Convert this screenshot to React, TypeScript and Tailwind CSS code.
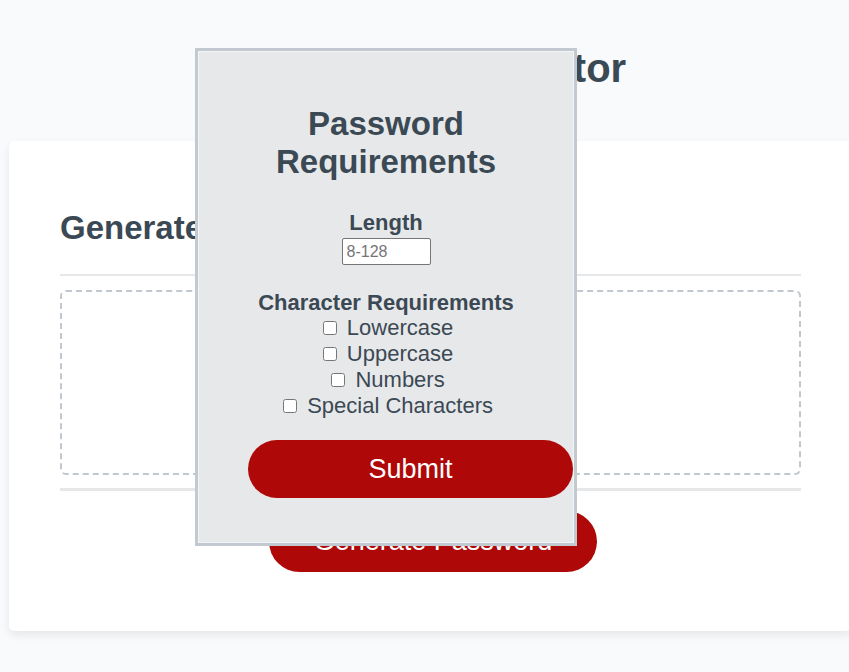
import React from "react";

// Character options shown in the requirements modal
const charOptions = ["Lowercase", "Uppercase", "Numbers", "Special Characters"];

export default function App() {
  return (
    <div className="relative min-h-screen w-full overflow-hidden bg-[#f9fafb] font-['Liberation_Sans',Arial,sans-serif] text-[#3b4954]">
      <div className="ml-[9px] w-[843px]">
        <h1 className="pt-[45px] text-center text-[40px] font-bold leading-[46px]">
          Password Generator
        </h1>

        {/* Card */}
        <div className="mt-[50px] h-[490px] rounded-[5px] bg-white px-[51px] shadow-[0_4px_10px_rgba(0,0,0,0.08)]">
          <div className="border-b-2 border-[#e6e7e9] pt-[68px] pb-[27px]">
            <h2 className="text-[33px] font-bold leading-[38px]">Generate a Password</h2>
          </div>
          <div className="mt-[14px] flex h-[185px] items-center justify-center rounded-[6px] border-2 border-dashed border-[#c0c7ce] text-[22px] text-[#8a949c]">
            Your Secure Password
          </div>
          <div className="mt-[13px] flex justify-center border-t-[3px] border-[#e6e7e9] pt-[20px] pl-[5px]">
            <button className="h-[61px] w-[328px] rounded-full bg-[#af0808] text-[27px] text-white">
              Generate Password
            </button>
          </div>
        </div>
      </div>

      {/* Requirements modal */}
      <div className="absolute left-[195px] top-[48px] h-[498px] w-[382px] border-[3px] border-[#c3c9d1] bg-[#e7e8ea] shadow-[inset_0_0_0_1px_#f3f4f5]">
        <div className="flex flex-col items-center pt-[54px]">
          <h2 className="px-[10px] text-center text-[33px] font-bold leading-[38px]">
            Password Requirements
          </h2>

          <label className="mt-[29px] text-[22px] font-bold leading-[25px]">Length</label>
          <input
            type="text"
            placeholder="8-128"
            className="mt-[3px] h-[27px] w-[89px] rounded-[2px] border border-[#767676] bg-white px-[4px] text-[16px] placeholder:text-[#757575]"
          />

          <div className="mt-[25px] text-[22px] font-bold leading-[25.3px]">Character Requirements</div>
          {charOptions.map((opt) => (
            <div key={opt} className="text-center text-[22px] leading-[26px]">
              <input type="checkbox" className="my-[3px] ml-[4px] mr-[4px] h-[14px] w-[14px]" /> <label>{opt}</label>
            </div>
          ))}

          <button className="mt-[21px] ml-[50px] h-[58px] w-[325px] self-start rounded-full bg-[#af0808] text-[27px] text-white">
            Submit
          </button>
        </div>
      </div>
    </div>
  );
}
